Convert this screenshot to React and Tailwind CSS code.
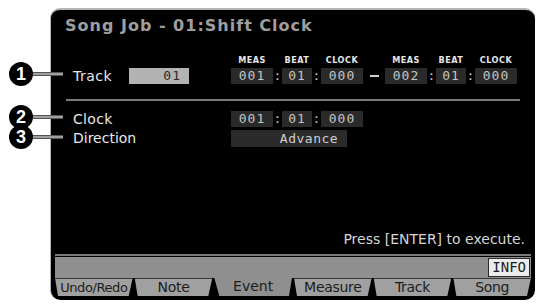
import React from "react";

const tabs = ["Undo/Redo", "Note", "Event", "Measure", "Track", "Song"];

function Box({ w, children, className = "" }) {
  return (
    <div
      className={`h-full flex items-center justify-center bg-[#2a2a2a] text-[#c4c4c4] tracking-[1px] ${className}`}
      style={{ width: w }}
    >
      {children}
    </div>
  );
}

function Colon() {
  return <div className="w-[9px] h-full flex items-center justify-center text-[#c4c4c4]">:</div>;
}

function TimeGroup({ m, b, c }) {
  return (
    <div className="flex h-full">
      <Box w={42}>{m}</Box>
      <Colon />
      <Box w={30}>{b}</Box>
      <Colon />
      <Box w={42}>{c}</Box>
    </div>
  );
}

function Headers() {
  return (
    <div className="flex text-[9px] leading-[9px] font-bold text-[#e6e6e6] tracking-[0.5px] font-['DejaVu_Sans_Condensed','DejaVu_Sans',sans-serif]">
      <div className="w-[42px] text-center">MEAS</div>
      <div className="w-[9px]" />
      <div className="w-[30px] text-center">BEAT</div>
      <div className="w-[9px]" />
      <div className="w-[42px] text-center">CLOCK</div>
    </div>
  );
}

function Callout({ n, top, len }) {
  return (
    <div className="absolute left-[9px] flex items-center" style={{ top }}>
      <div className="w-[24px] h-[24px] rounded-full bg-black text-white text-[18px] font-bold flex items-center justify-center font-['Liberation_Sans',sans-serif]">
        {n}
      </div>
      <div className="h-[4px] bg-[#a0a0a0] border-y border-[#555]" style={{ width: len }} />
    </div>
  );
}

export default function App() {
  return (
    <div className="relative w-[540px] h-[304px] bg-white overflow-hidden font-['DejaVu_Sans',sans-serif]">
      <div className="ml-[50px] mt-[8px] w-[485px] h-[292px] bg-black rounded-[10px] border-t-2 border-l border-[#b5b5b5] flex flex-col">
        <div className="pt-[6px] pl-[14px] h-[26px] text-[16px] leading-[20px] font-bold text-[#9e9e9e] tracking-[1px]">
          Song Job - 01:Shift Clock
        </div>

        <div className="mt-[20px] ml-[180px] flex">
          <Headers />
          <div className="w-[22px]" />
          <Headers />
        </div>

        <div className="mt-[3px] h-[16px] flex items-center text-[13px] font-['DejaVu_Sans_Mono',monospace]">
          <div className="w-[78px] pl-[22px] text-[14px] tracking-[0.5px] text-[#e8e8e8] font-['DejaVu_Sans',sans-serif]">Track</div>
          <div className="w-[60px] h-full bg-[#b3b3b3] text-[#2a2a2a] tracking-[1px] flex items-center justify-end pr-[8px]">01</div>
          <div className="w-[42px]" />
          <TimeGroup m="001" b="01" c="000" />
          <div className="w-[22px] flex justify-center">
            <div className="w-[9px] h-[2px] bg-[#d0d0d0]" />
          </div>
          <TimeGroup m="002" b="01" c="000" />
        </div>

        <div className="mt-[15px] mx-[15px] h-[2px] bg-[#7a7a7a]" />

        <div className="mt-[10px] h-[16px] flex items-center text-[13px] font-['DejaVu_Sans_Mono',monospace]">
          <div className="w-[180px] pl-[22px] text-[14px] tracking-[0.3px] text-[#e8e8e8] font-['DejaVu_Sans',sans-serif]">Clock</div>
          <TimeGroup m="001" b="01" c="000" />
        </div>

        <div className="mt-[3px] h-[17px] flex items-center text-[14px]">
          <div className="w-[180px] pl-[22px] text-[#e8e8e8]">Direction</div>
          <div className="w-[116px] h-full bg-[#2a2a2a] text-[#cfcfcf] text-[13px] tracking-[0.5px] flex items-center justify-center pl-[40px] font-['DejaVu_Sans_Mono',monospace]">
            Advance
          </div>
        </div>

        <div className="mt-[84px] h-[16px] pr-[10px] text-right text-[14px] leading-[16px] text-[#d6d6d6]">
          Press [ENTER] to execute.
        </div>

        <div className="mt-[7px] mx-[4px] h-[2px] bg-[#7a7a7a]" />

        <div className="mt-[1px] mx-[4px] h-[21px] bg-[#8f8f8f] flex items-center justify-end pr-[1px]">
          <div className="h-[19px] px-[3px] bg-[#ececec] border border-[#2a2a2a] text-[14px] leading-[17px] text-[#1a1a1a] font-['DejaVu_Sans_Mono',monospace]">
            INFO
          </div>
        </div>

        <div className="mx-[4px] h-[18px] grid grid-cols-6 gap-[2px] text-[14px] leading-[17px]">
          {tabs.map((t) =>
            t === "Event" ? (
              <div
                key={t}
                className="bg-[#8f8f8f] text-[#1c1c1c] text-center [clip-path:polygon(0_0,100%_0,calc(100%_-_3px)_100%,5px_100%)]"
              >
                {t}
              </div>
            ) : (
              <div
                key={t}
                className={`bg-[#a0a0a0] border-t border-[#3a3a3a] text-[#1c1c1c] text-center whitespace-nowrap overflow-hidden rounded-b-[3px] [clip-path:polygon(0_0,100%_0,calc(100%_-_4px)_100%,3px_100%)] ${
                  t === "Undo/Redo" ? "text-[13px] tracking-[-0.4px]" : "tracking-[-0.3px]"
                }`}
              >
                {t}
              </div>
            )
          )}
        </div>
      </div>

      <Callout n="1" top={62} len={30} />
      <Callout n="2" top={105} len={30} />
      <Callout n="3" top={125} len={30} />
    </div>
  );
}
